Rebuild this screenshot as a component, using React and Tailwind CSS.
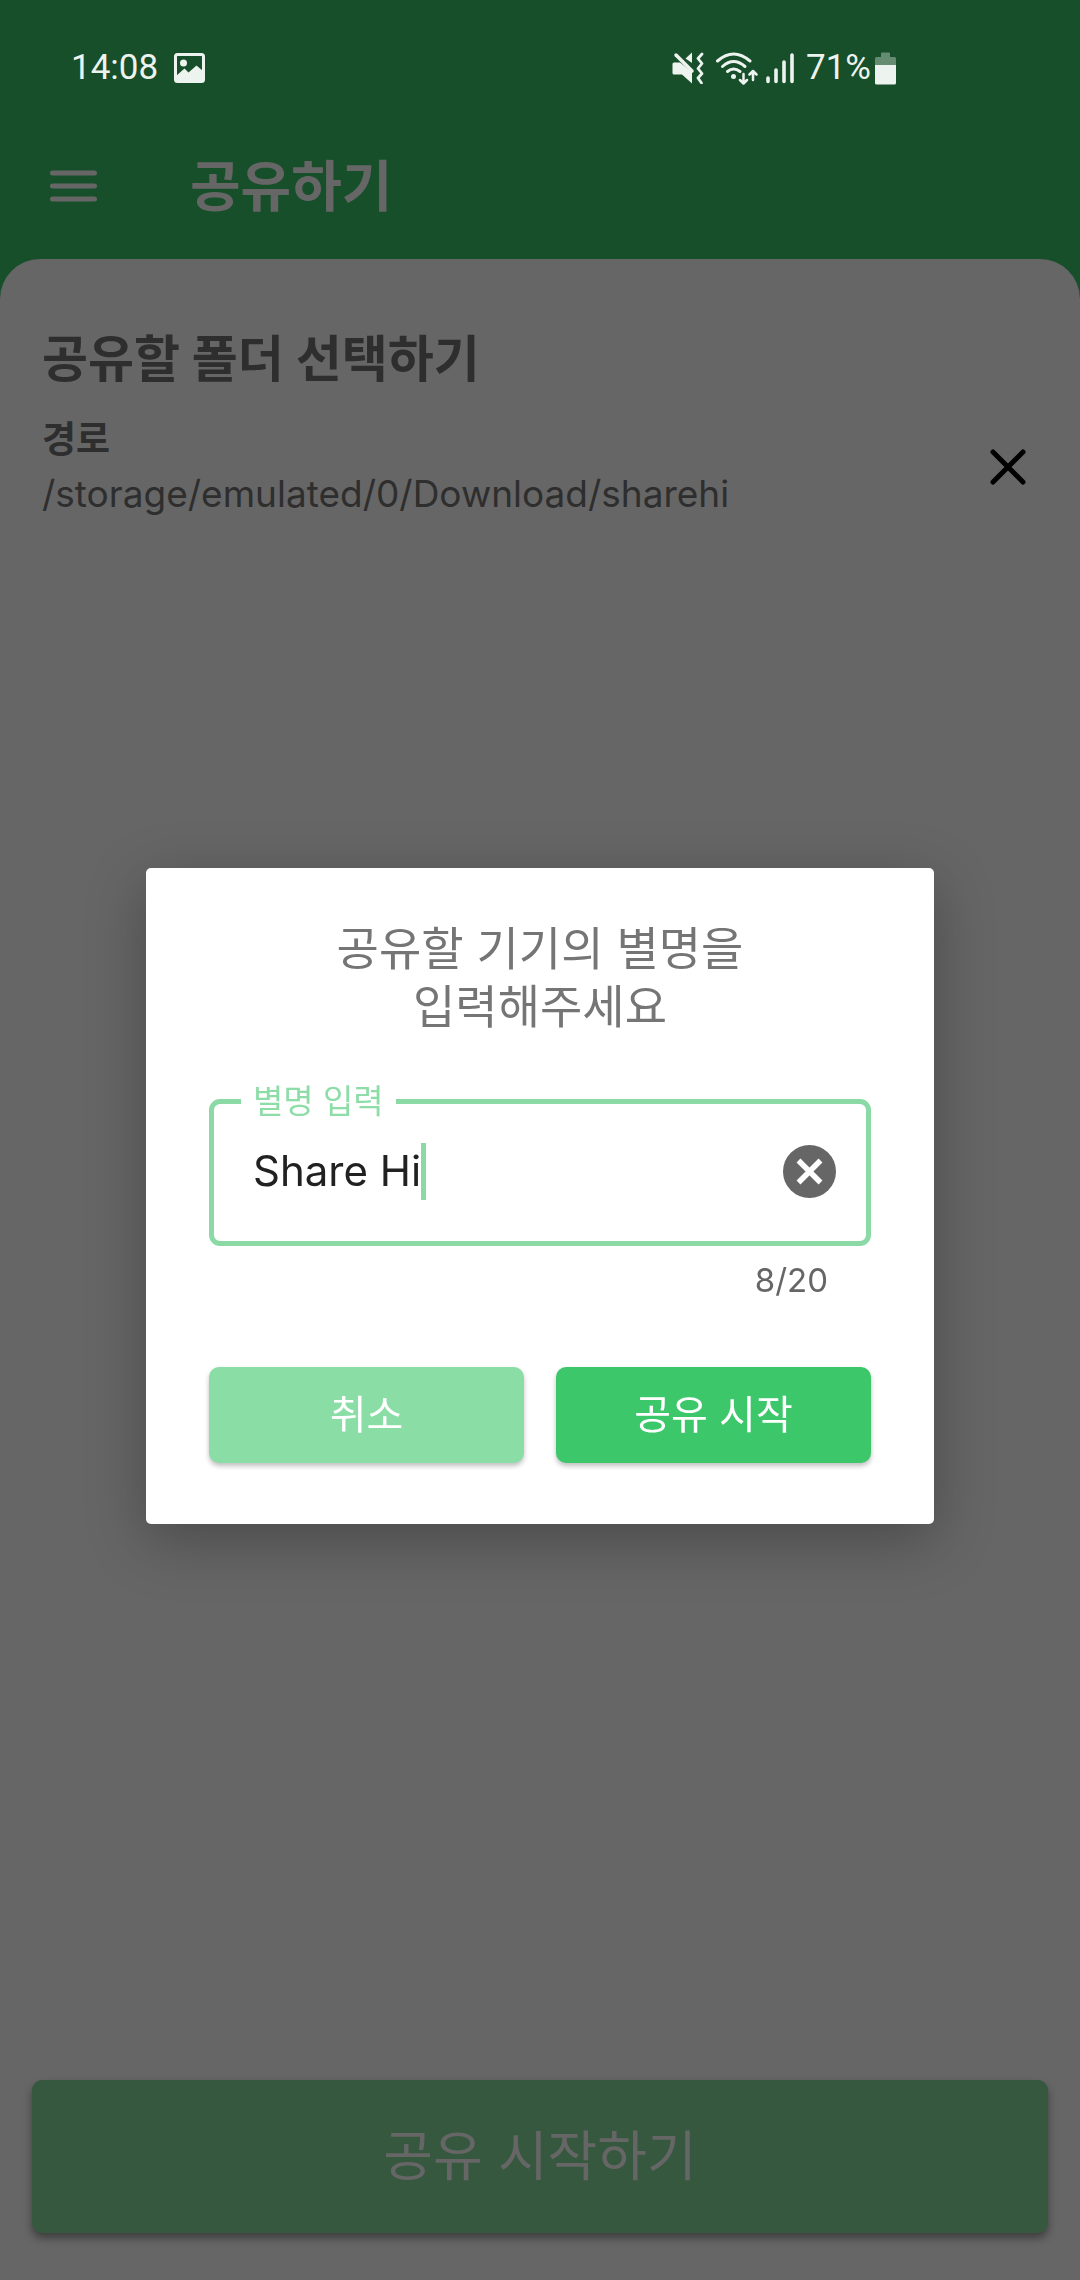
import { useState } from "react";

function PictureIcon() {
  return (
    <svg className="h-[30px] w-[31px]" viewBox="0 0 31 30" aria-hidden="true">
      <rect x="1.5" y="1.5" width="28" height="27" rx="2" fill="none" stroke="#edf3ee" strokeWidth="3" />
      <circle cx="9.5" cy="10" r="3.5" fill="#edf3ee" />
      <path d="M2 23 L10.5 15.5 L14.5 19.5 L22.500 12.500 L29 18 V28.500 H2 Z" fill="#edf3ee" />
    </svg>
  );
}

function MuteVibrateIcon() {
  return (
    <svg className="h-8 w-8" viewBox="0 0 32 32" aria-hidden="true">
      <path d="M2 10.500 H8 L20 20 V31.500 L10 22.500 H2 Q0.500 22.500 0.500 21 V12 Q0.500 10.500 2 10.500 Z" fill="#edf3ee" />
      <path d="M20 0.500 V11 L13.500 6.500 Z" fill="#edf3ee" />
      <path d="M4 3 L20 19" stroke="#edf3ee" strokeWidth="3.500" strokeLinecap="round" />
      <path d="M30 2 L26 6.500 L30 11.500 L26 16.500 L30 21.500 L26 26 L29.500 31" fill="none" stroke="#edf3ee" strokeWidth="2.800" strokeLinejoin="round" strokeLinecap="round" />
    </svg>
  );
}

function WifiIcon() {
  return (
    <svg className="h-[33px] w-[42px]" viewBox="0 0 42 33" fill="none" stroke="#edf3ee" strokeLinecap="round" aria-hidden="true">
      <g strokeWidth="3">
        <path d="M1.500 9 Q17.500 -5 34 9" />
        <path d="M6.500 14.500 Q17.500 4.500 29 14.500" />
        <path d="M11.500 19.500 Q17.500 14.500 24 19.500" />
      </g>
      <circle cx="17.500" cy="24.500" r="2.500" fill="#edf3ee" stroke="none" />
      <g strokeWidth="2.500" strokeLinejoin="round">
        <path d="M27.500 22 V31 M24 28 L27.500 31.500 L31 28" />
        <path d="M37 28 V19.500 M33.500 22.500 L37 19 L40.500 22.500" />
      </g>
    </svg>
  );
}

function SignalIcon() {
  return (
    <svg className="h-8 w-7" viewBox="0 0 28 32" stroke="#edf3ee" strokeWidth="3.600" strokeLinecap="round" aria-hidden="true">
      <path d="M2 26 V29.500 M10 18 V29.500 M18 10 V29.500 M26 3 V29.500" />
    </svg>
  );
}

function BatteryIcon() {
  return (
    <svg className="h-[33px] w-[21px]" viewBox="0 0 21 33" aria-hidden="true">
      <path d="M6 1.500 Q6 0.500 7 0.500 H14 Q15 0.500 15 1.500 V5 H19.500 Q21 5 21 6.500 V13 H0 V6.500 Q0 5 1.500 5 H6 Z" fill="#658b70" />
      <path d="M0 13 H21 V31 Q21 32.500 19.500 32.500 H1.500 Q0 32.500 0 31 Z" fill="#edf3ee" />
    </svg>
  );
}

function StatusBar() {
  return (
    <div className="flex h-[136px] items-center justify-between pl-[71px] pr-[184px] text-[#edf3ee]">
      <div className="flex items-center gap-4">
        <span className="font-['Roboto',sans-serif] text-[35px] leading-10">14:08</span>
        <PictureIcon />
      </div>
      <div className="flex items-center">
        <MuteVibrateIcon />
        <span className="ml-3 flex"><WifiIcon /></span>
        <span className="ml-2 flex"><SignalIcon /></span>
        <span className="ml-3 font-['Roboto',sans-serif] text-[35px] leading-10">71%</span>
        <span className="ml-1 flex"><BatteryIcon /></span>
      </div>
    </div>
  );
}

function NicknameDialog() {
  const [name, setName] = useState("Share Hi");
  return (
    <div className="fixed inset-0 flex items-center justify-center pt-28">
      <form
        role="dialog"
        aria-labelledby="dialog-title"
        onSubmit={(e) => e.preventDefault()}
        className="w-full max-w-[788px] rounded-[5px] bg-white px-[63px] pt-[51px] pb-[61px] shadow-[0_16px_60px_rgba(0,0,0,0.28)]"
      >
        <h2 id="dialog-title" className="text-center text-[46px] leading-[58px] text-[#757575]">
          공유할 기기의 별명을
          <br />
          입력해주세요
        </h2>
        <fieldset className="mt-[46px] h-[165px] rounded-[11px] border-[5px] border-[#8bdaa6] pl-[27px]">
          <legend className="px-3 text-[33px] leading-10 text-[#8edda9]">
            <label htmlFor="nickname">별명 입력</label>
          </legend>
          <div className="flex h-[100px] items-center pr-[30px] pl-3">
            <input
              id="nickname"
              type="text"
              maxLength={20}
              value={name}
              onChange={(e) => setName(e.target.value)}
              className="field-sizing-content bg-transparent text-[42px] leading-[58px] text-[#212121] caret-transparent outline-none"
            />
            <span className="h-[57px] w-[5px] bg-[#8bdaa6]" />
            <button type="button" aria-label="지우기" onClick={() => setName("")} className="ml-auto">
              <svg className="size-[53px]" viewBox="0 0 53 53" aria-hidden="true">
                <circle cx="26.500" cy="26.500" r="26.500" fill="#666" />
                <path d="M15.500 15.500 L37.500 37.500 M37.500 15.500 L15.500 37.500" stroke="#fff" strokeWidth="5.500" />
              </svg>
            </button>
          </div>
        </fieldset>
        <p className="mt-[14px] pr-[43px] text-right text-[33px] leading-10 text-[#666]">{name.length}/20</p>
        <div className="mt-[67px] grid grid-cols-2 gap-8 text-[40px] leading-[48px] text-white">
          <button type="button" className="h-24 rounded-[10px] bg-[#8adda5] shadow-[0_3px_5px_rgba(0,0,0,0.25)]">
            취소
          </button>
          <button type="submit" className="h-24 rounded-[10px] bg-[#3dc76b] shadow-[0_3px_5px_rgba(0,0,0,0.25)]">
            공유 시작
          </button>
        </div>
      </form>
    </div>
  );
}

export default function App() {
  return (
    <div className="flex min-h-screen flex-col bg-[#184f2b] font-['Inter','Noto_Sans_CJK_KR',sans-serif]">
      <StatusBar />
      <header className="flex h-[123px] items-center px-[50px] pb-[23px]">
        <button type="button" aria-label="메뉴" className="flex h-16 items-center">
          <svg className="h-8 w-[47px]" viewBox="0 0 47 32" stroke="#666" strokeWidth="5" strokeLinecap="round" aria-hidden="true">
            <path d="M2.500 3 H44.500 M2.500 16 H44.500 M2.500 29 H44.500" />
          </svg>
        </button>
        <h1 className="ml-[93px] text-[55px] leading-[68px] font-bold text-[#666]">공유하기</h1>
      </header>
      <main className="flex grow flex-col rounded-t-[40px] bg-[#666] px-8 pt-[66px] pb-[47px] text-[#2e2e2e]">
        <section className="flex flex-col px-[10px]">
          <h2 className="text-[50px] leading-[68px] font-bold">공유할 폴더 선택하기</h2>
          <div className="mt-5 flex items-center justify-between pr-3">
            <div className="min-w-0">
              <h3 className="text-[37px] leading-[54px] font-bold">경로</h3>
              <p className="text-[37px] leading-[54px] break-all">/storage/emulated/0/Download/sharehi</p>
            </div>
            <button type="button" aria-label="경로 지우기">
              <svg className="size-9" viewBox="0 0 36 36" stroke="#000" strokeWidth="5" strokeLinecap="round" aria-hidden="true">
                <path d="M3 3 L33 33 M33 3 L3 33" />
              </svg>
            </button>
          </div>
        </section>
        <button
          type="button"
          className="mt-auto h-[153px] w-full rounded-[10px] bg-[#36583f] text-[54px] leading-[64px] text-[#666] shadow-[0_5px_9px_rgba(0,0,0,0.4)]"
        >
          공유 시작하기
        </button>
      </main>
      <NicknameDialog />
    </div>
  );
}
